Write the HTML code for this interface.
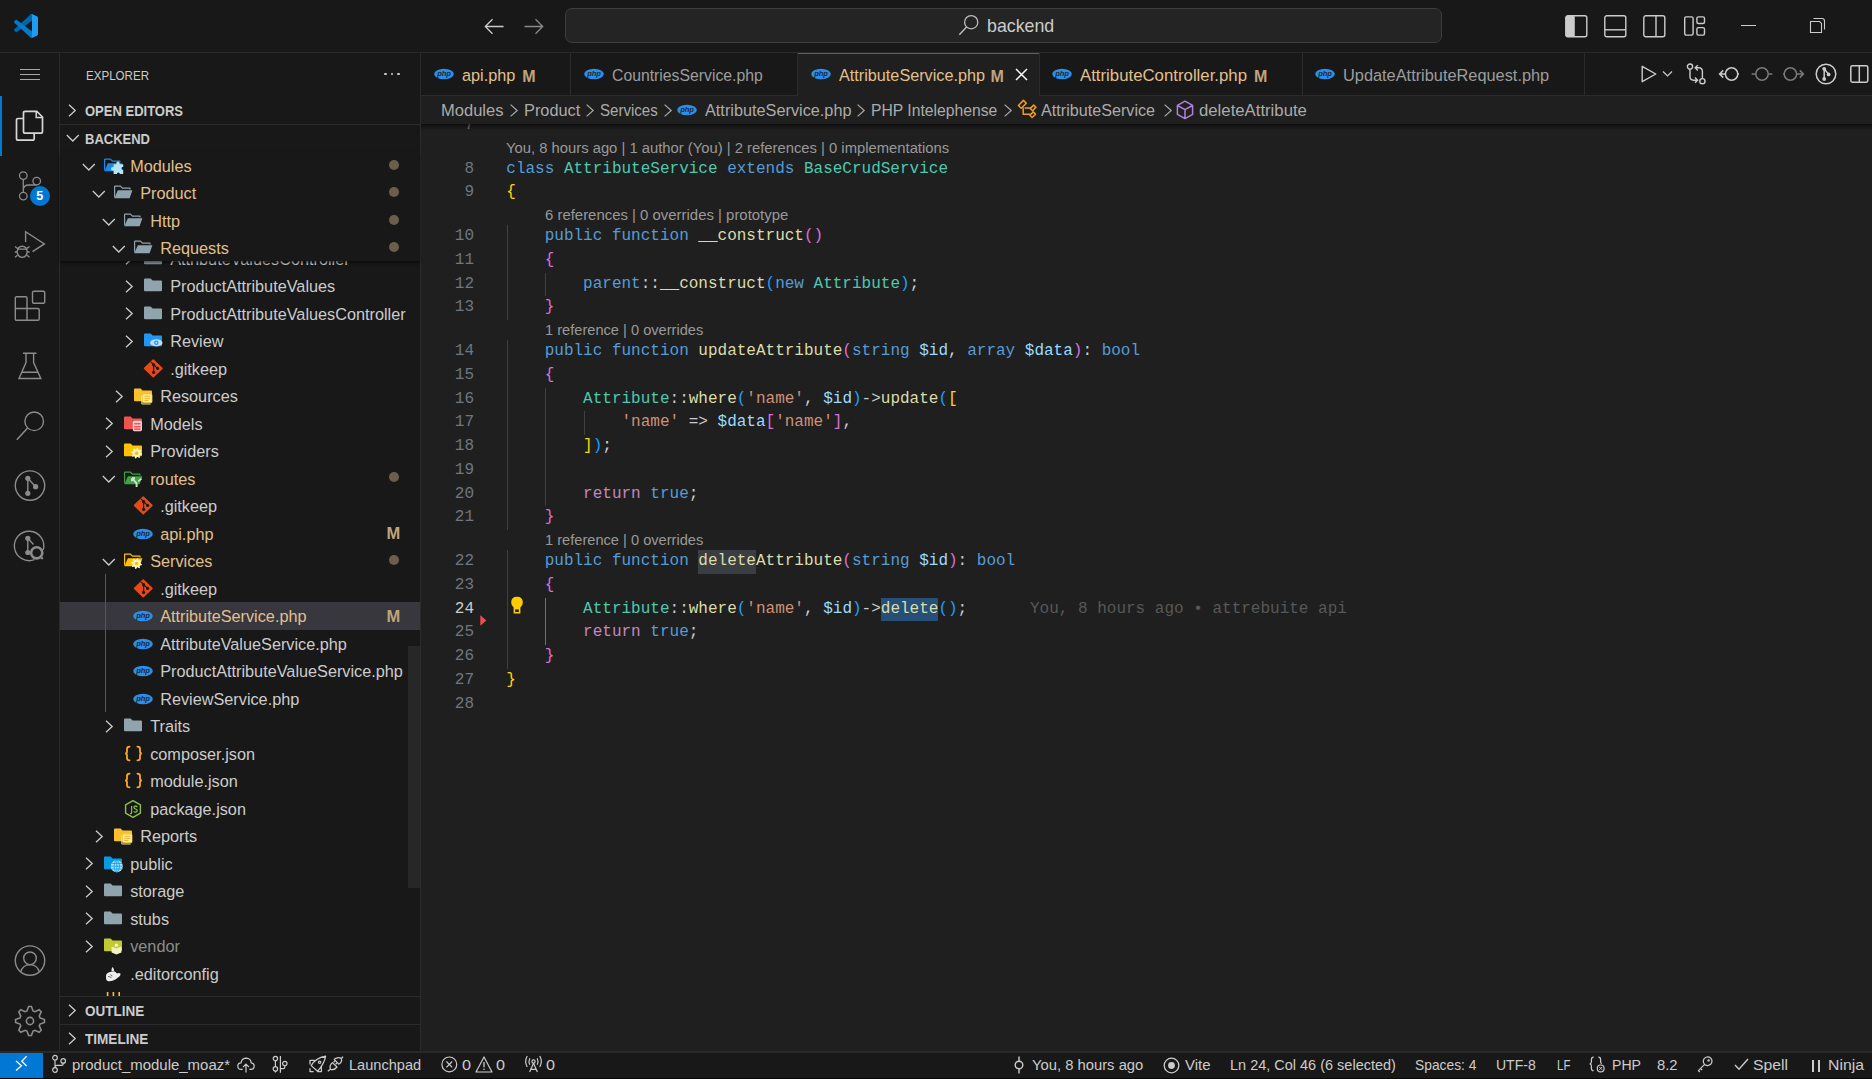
<!DOCTYPE html><html><head><meta charset="utf-8"><title>VS Code</title><style>
*{box-sizing:border-box}
html,body{margin:0;padding:0}
body{width:1872px;height:1079px;overflow:hidden;background:#181818;position:relative;font-family:"Liberation Sans",sans-serif;color:#cccccc}
.a{position:absolute}
.t{position:absolute;white-space:pre;line-height:1}
svg{position:absolute;overflow:visible}
.ui{font-size:16.25px}
.mono{font-family:"Liberation Mono",monospace}
</style></head><body>
<div class="a" style="left:0;top:0;width:1872px;height:52px;background:#181818"></div>
<div class="a" style="left:0;top:52px;width:1872px;height:1px;background:#2b2b2b"></div>
<svg style="left:14px;top:14px" width="24" height="24" viewBox="0 0 100 100">
<path d="M96.46 10.8L75.86.87C73.48-.28 70.63.2 68.76 2.07L1.33 63.55c-1.81 1.65-1.81 4.51.01 6.16l5.51 5.01c1.49 1.35 3.72 1.45 5.32.24l81.23-61.62c2.72-2.07 6.64-.13 6.64 3.29v-.24c0-2.4-1.38-4.59-3.54-5.63z" fill="#0065a9"/>
<path d="M96.46 89.2l-20.6 9.92c-2.38 1.15-5.23.66-7.1-1.2L1.33 36.44c-1.81-1.65-1.81-4.51.01-6.16l5.51-5.01c1.49-1.35 3.72-1.45 5.32-.24l81.23 61.62c2.72 2.07 6.640.13 6.64-3.29v.24c0 2.4-1.38 4.59-3.54 5.63z" fill="#007acc"/>
<path d="M75.86 99.13c-2.38 1.14-5.23.66-7.1-1.21 2.3 2.3 6.24.67 6.24-2.58V4.66c0-3.25-3.94-4.88-6.24-2.58 1.87-1.87 4.72-2.36 7.1-1.21l20.6 9.91c2.16 1.04 3.54 3.23 3.54 5.63v67.17c0 2.4-1.38 4.6-3.54 5.63l-20.6 9.92z" fill="#1f9cf0"/>
</svg>
<svg style="left:484px;top:18px" width="20" height="17" viewBox="0 0 20 17"><path d="M19.5 8.5H1.5M8.5 1.3L1.3 8.5L8.5 15.7" stroke="#cccccc" stroke-width="1.3" fill="none"/></svg>
<svg style="left:524px;top:18px" width="20" height="17" viewBox="0 0 20 17"><path d="M0.5 8.5H18.5M11.5 1.3L18.7 8.5L11.5 15.7" stroke="#8a8a8a" stroke-width="1.3" fill="none"/></svg>
<div class="a" style="left:565px;top:8px;width:877px;height:35px;background:#242424;border:1px solid #3d3d3d;border-radius:7px"></div>
<svg style="left:958px;top:14px" width="22" height="22" viewBox="0 0 22 22"><circle cx="13.2" cy="8.2" r="6.6" stroke="#bdbdbd" stroke-width="1.3" fill="none"/><path d="M8.6 12.9L1.3 20.8" stroke="#bdbdbd" stroke-width="1.4"/></svg>
<div class="t" style="left:987px;top:16.5px;font-family:'Liberation Sans';font-size:18.5px;font-weight:normal;color:#cccccc;transform:scaleX(0.9608);transform-origin:0 0;">backend</div>
<svg style="left:1565px;top:15px" width="23" height="23" viewBox="0 0 23 23"><rect x="0.8" y="0.8" width="21" height="21" rx="2" stroke="#cccccc" stroke-width="1.4" fill="none"/><rect x="0.8" y="0.8" width="9" height="21" rx="1.5" fill="#cccccc"/></svg>
<svg style="left:1604px;top:15px" width="23" height="23" viewBox="0 0 23 23"><rect x="0.8" y="0.8" width="21" height="21" rx="2" stroke="#cccccc" stroke-width="1.4" fill="none"/><path d="M0.8 14.8H21.8" stroke="#cccccc" stroke-width="1.4"/></svg>
<svg style="left:1643px;top:15px" width="23" height="23" viewBox="0 0 23 23"><rect x="0.8" y="0.8" width="21" height="21" rx="2" stroke="#cccccc" stroke-width="1.4" fill="none"/><path d="M13 0.8V21.8" stroke="#cccccc" stroke-width="1.4"/></svg>
<svg style="left:1684px;top:16px" width="22" height="20" viewBox="0 0 22 20"><rect x="0.7" y="0.9" width="8.4" height="18.2" rx="1.5" stroke="#cccccc" stroke-width="1.4" fill="none"/><rect x="12.9" y="0.9" width="7.6" height="6.6" rx="1.5" stroke="#cccccc" stroke-width="1.4" fill="none"/><rect x="12.9" y="11.6" width="7.6" height="7.5" rx="1.5" stroke="#cccccc" stroke-width="1.4" fill="none"/></svg>
<div class="a" style="left:1741px;top:25px;width:15px;height:1px;background:#cccccc"></div>
<svg style="left:1809px;top:17px" width="17" height="17" viewBox="0 0 17 17"><path d="M1.5 4.5H10.6L12.5 6.4V15.5H1.5Z" stroke="#cccccc" stroke-width="1.1" fill="none"/><path d="M4.5 1.5H13Q15.5 1.5 15.5 4V12.6" stroke="#cccccc" stroke-width="1.1" fill="none"/></svg>
<div class="a" style="left:0;top:53px;width:59px;height:998px;background:#181818"></div>
<div class="a" style="left:59px;top:53px;width:1px;height:998px;background:#2b2b2b"></div>
<div class="a" style="left:20px;top:69px;width:20px;height:1.2px;background:#a8a8a8"></div>
<div class="a" style="left:20px;top:74px;width:20px;height:1.2px;background:#a8a8a8"></div>
<div class="a" style="left:20px;top:79px;width:20px;height:1.2px;background:#a8a8a8"></div>
<div class="a" style="left:0;top:96px;width:2px;height:60px;background:#0078d4"></div>
<svg style="left:15px;top:110px" width="30" height="32" viewBox="0 0 30 32">
<path d="M8.5 8.5H3.2Q1.5 8.5 1.5 10.2V28.5Q1.5 30.2 3.2 30.2H17.5Q19.2 30.2 19.2 28.5V23.5" stroke="#d7d7d7" stroke-width="1.7" fill="none"/>
<path d="M10.2 1.3H21.8L27.5 7V21.5Q27.5 23.2 25.8 23.2H10.2Q8.5 23.2 8.5 21.5V3Q8.5 1.3 10.2 1.3Z" stroke="#d7d7d7" stroke-width="1.7" fill="none"/>
<path d="M21.2 1.5V7.6H27.3" stroke="#d7d7d7" stroke-width="1.5" fill="none"/>
</svg>
<svg style="left:15px;top:168px" width="32" height="40" viewBox="0 0 32 40">
<circle cx="8.3" cy="7.6" r="3.8" stroke="#8c8c8c" stroke-width="1.3" fill="none"/>
<circle cx="21.7" cy="13.1" r="3.8" stroke="#8c8c8c" stroke-width="1.3" fill="none"/>
<circle cx="8.3" cy="28.1" r="3.8" stroke="#8c8c8c" stroke-width="1.3" fill="none"/>
<path d="M8.3 11.4V24.3M8.3 22Q8.3 17 14 17H18Q21.7 17 21.7 16.9" stroke="#8c8c8c" stroke-width="1.3" fill="none"/>
</svg>
<div class="a" style="left:30px;top:186px;width:20px;height:20px;border-radius:50%;background:#0078d4"></div>
<div class="t" style="left:36.3px;top:190px;font-size:12.5px;font-weight:bold;color:#ffffff">5</div>
<svg style="left:14px;top:229px" width="34" height="28" viewBox="0 0 34 28">
<path d="M11.6 13V2.7L30.4 14.9L18.5 22.6" stroke="#8c8c8c" stroke-width="1.4" fill="none" stroke-linejoin="miter"/>
<ellipse cx="8.2" cy="22.8" rx="5" ry="5.6" stroke="#8c8c8c" stroke-width="1.4" fill="none"/>
<path d="M3.2 20.2H13.2M1 17.5L3.6 19.4M15.5 17.5L12.8 19.4M0.8 23H3.2M13.2 23H15.6M1 28.2L3.5 26.2M15.5 28.2L13 26.2" stroke="#8c8c8c" stroke-width="1.3" fill="none"/>
</svg>
<svg style="left:14px;top:290px" width="32" height="32" viewBox="0 0 32 32">
<path d="M2.6 6.7H11.7Q13 6.7 13 8V18.5H23.9Q25.2 18.5 25.2 19.8V29Q25.2 30.3 23.9 30.3H2.6Q1.3 30.3 1.3 29V8Q1.3 6.7 2.6 6.7ZM1.3 18.5H13V30.3" stroke="#8c8c8c" stroke-width="1.4" fill="none"/>
<rect x="18.5" y="1.3" width="12.2" height="12" rx="1.3" stroke="#8c8c8c" stroke-width="1.4" fill="none"/>
</svg>
<svg style="left:17px;top:351px" width="26" height="30" viewBox="0 0 26 30">
<path d="M6 2.3H19.5M9 2.3V11.5L2 27.5H23.8L16.6 11.5V2.3M4.6 21.3H21" stroke="#8c8c8c" stroke-width="1.4" fill="none"/>
</svg>
<svg style="left:15px;top:410px" width="32" height="32" viewBox="0 0 32 32">
<circle cx="19.2" cy="11.3" r="9.3" stroke="#8c8c8c" stroke-width="1.4" fill="none"/>
<path d="M12.6 17.9L1.8 29.8" stroke="#8c8c8c" stroke-width="1.5" fill="none"/>
</svg>
<svg style="left:14px;top:470px" width="32" height="32" viewBox="0 0 32 32">
<circle cx="16" cy="15.6" r="14.7" stroke="#8c8c8c" stroke-width="1.4" fill="none"/>
<circle cx="13.8" cy="8.3" r="2.6" fill="#8c8c8c"/><circle cx="21.6" cy="16.7" r="2.6" fill="#8c8c8c"/><circle cx="13.8" cy="23.3" r="2.6" fill="#8c8c8c"/>
<path d="M13.8 8.3V23.3M13.8 8.3L21.6 16.7" stroke="#8c8c8c" stroke-width="1.4"/>
</svg>
<svg style="left:14px;top:530px" width="32" height="32" viewBox="0 0 32 32">
<path d="M29.2 20A14.7 14.7 0 1 0 20.5 29.6" stroke="#8c8c8c" stroke-width="1.4" fill="none"/>
<circle cx="13.8" cy="8.3" r="2.6" fill="#8c8c8c"/><circle cx="13.8" cy="22.5" r="2.6" fill="#8c8c8c"/>
<path d="M13.8 8.3V22.5M13.8 8.3L19.5 14.5" stroke="#8c8c8c" stroke-width="1.4"/>
<circle cx="22.7" cy="22.8" r="5.6" stroke="#8c8c8c" stroke-width="2.6" fill="#181818"/>
<path d="M26.4 26.5L28.8 29" stroke="#8c8c8c" stroke-width="2"/>
</svg>
<svg style="left:14px;top:945px" width="32" height="32" viewBox="0 0 32 32">
<circle cx="16" cy="15.6" r="14.7" stroke="#8c8c8c" stroke-width="1.4" fill="none"/>
<circle cx="16" cy="13.3" r="6.3" stroke="#8c8c8c" stroke-width="1.4" fill="none"/>
<path d="M6.6 27.2Q8.5 19.8 16 19.6Q23.5 19.8 25.4 27.2" stroke="#8c8c8c" stroke-width="1.4" fill="none"/>
</svg>
<svg style="left:14px;top:1005px" width="32" height="32" viewBox="0 0 32 32">
<polygon points="14.58,1.57 17.42,1.57 19.05,5.95 20.95,6.74 25.20,4.79 27.21,6.80 25.26,11.05 26.05,12.95 30.43,14.58 30.43,17.42 26.05,19.05 25.26,20.95 27.21,25.20 25.20,27.21 20.95,25.26 19.05,26.05 17.42,30.43 14.58,30.43 12.95,26.05 11.05,25.26 6.80,27.21 4.79,25.20 6.74,20.95 5.95,19.05 1.57,17.42 1.57,14.58 5.95,12.95 6.74,11.05 4.79,6.80 6.80,4.79 11.05,6.74 12.95,5.95" stroke="#8c8c8c" stroke-width="1.6" fill="none" stroke-linejoin="miter"/>
<circle cx="16" cy="16" r="3.6" stroke="#8c8c8c" stroke-width="1.6" fill="none"/>
</svg>
<div class="a" style="left:60px;top:53px;width:360px;height:998px;background:#181818"></div>
<div class="a" style="left:420px;top:53px;width:1px;height:998px;background:#2b2b2b"></div>
<div class="t" style="left:85.5px;top:68.6px;font-family:'Liberation Sans';font-size:13.5px;font-weight:normal;color:#cccccc;transform:scaleX(0.8569);transform-origin:0 0;">EXPLORER</div>
<div class="a" style="left:384.3px;top:72.6px;width:2.4px;height:2.4px;border-radius:50%;background:#cccccc"></div>
<div class="a" style="left:390.8px;top:72.6px;width:2.4px;height:2.4px;border-radius:50%;background:#cccccc"></div>
<div class="a" style="left:397.3px;top:72.6px;width:2.4px;height:2.4px;border-radius:50%;background:#cccccc"></div>
<svg style="left:68.3px;top:103.8px" width="9" height="13" viewBox="0 0 9 13"><path d="M1 0.8L7.2 6.5L1 12.2" stroke="#cccccc" stroke-width="1.3" fill="none"/></svg>
<div class="t" style="left:85px;top:104.0px;font-family:'Liberation Sans';font-size:14px;font-weight:bold;color:#cccccc;transform:scaleX(0.9286);transform-origin:0 0;">OPEN EDITORS</div>
<div class="a" style="left:60px;top:124px;width:360px;height:1px;background:#2b2b2b"></div>
<svg style="left:66px;top:134px" width="14" height="8" viewBox="0 0 14 8"><path d="M0.8 1L6.8 7L12.8 1" stroke="#cccccc" stroke-width="1.3" fill="none"/></svg>
<div class="t" style="left:85px;top:132.0px;font-family:'Liberation Sans';font-size:14px;font-weight:bold;color:#cccccc;transform:scaleX(0.9286);transform-origin:0 0;">BACKEND</div>
<div class="a" style="left:60px;top:152px;width:360px;height:844px;overflow:hidden">
<div class="a" style="left:-60px;top:-152px;width:420px;height:1079px">
<svg style="left:124.65px;top:252.2px" width="9" height="13" viewBox="0 0 9 13"><path d="M1 0.8L7.2 6.5L1 12.2" stroke="#cccccc" stroke-width="1.3" fill="none"/></svg>
<svg style="left:142.7px;top:248.7px" width="20" height="20" viewBox="0 0 20 20"><path d="M1 3.6Q1 2.6 2 2.6H7.6L9.6 4.6H18Q19 4.6 19 5.6V14.2Q19 15.2 18 15.2H2Q1 15.2 1 14.2Z" fill="#90a4ae"/></svg>
<div class="t ui" style="left:170.2px;top:250.49999999999997px;color:#cccccc">AttributeValuesController</div>
<svg style="left:124.65px;top:279.7px" width="9" height="13" viewBox="0 0 9 13"><path d="M1 0.8L7.2 6.5L1 12.2" stroke="#cccccc" stroke-width="1.3" fill="none"/></svg>
<svg style="left:142.7px;top:276.2px" width="20" height="20" viewBox="0 0 20 20"><path d="M1 3.6Q1 2.6 2 2.6H7.6L9.6 4.6H18Q19 4.6 19 5.6V14.2Q19 15.2 18 15.2H2Q1 15.2 1 14.2Z" fill="#90a4ae"/></svg>
<div class="t ui" style="left:170.2px;top:278.0px;color:#cccccc">ProductAttributeValues</div>
<svg style="left:124.65px;top:307.2px" width="9" height="13" viewBox="0 0 9 13"><path d="M1 0.8L7.2 6.5L1 12.2" stroke="#cccccc" stroke-width="1.3" fill="none"/></svg>
<svg style="left:142.7px;top:303.7px" width="20" height="20" viewBox="0 0 20 20"><path d="M1 3.6Q1 2.6 2 2.6H7.6L9.6 4.6H18Q19 4.6 19 5.6V14.2Q19 15.2 18 15.2H2Q1 15.2 1 14.2Z" fill="#90a4ae"/></svg>
<div class="t ui" style="left:170.2px;top:305.5px;color:#cccccc">ProductAttributeValuesController</div>
<svg style="left:124.65px;top:334.7px" width="9" height="13" viewBox="0 0 9 13"><path d="M1 0.8L7.2 6.5L1 12.2" stroke="#cccccc" stroke-width="1.3" fill="none"/></svg>
<svg style="left:142.7px;top:331.2px" width="20" height="20" viewBox="0 0 20 20"><path d="M1 3.6Q1 2.6 2 2.6H7.6L9.6 4.6H18Q19 4.6 19 5.6V14.2Q19 15.2 18 15.2H2Q1 15.2 1 14.2Z" fill="#2196f3"/><ellipse cx="13.3" cy="11.8" rx="6.2" ry="3.6" fill="#bbdefb"/><circle cx="13.3" cy="11.8" r="2.2" fill="#2196f3"/><circle cx="13.3" cy="11.8" r="1" fill="#bbdefb"/></svg>
<div class="t ui" style="left:170.2px;top:333.0px;color:#cccccc">Review</div>
<svg style="left:142.7px;top:358.7px" width="20" height="20" viewBox="0 0 20 20"><path d="M10.25 1.2L18.9 9.45L10.25 17.7L1.6 9.45Z" fill="#e64a19" stroke="#e64a19" stroke-width="1.6" stroke-linejoin="round"/><path d="M8 2.8L10.6 5.7V13.4M10.6 5.7L14.6 9.4" stroke="#1a1a1a" stroke-width="1.2" fill="none"/><circle cx="10.6" cy="5.7" r="1.6" fill="#1a1a1a"/><circle cx="14.6" cy="9.4" r="1.6" fill="#1a1a1a"/><circle cx="10.6" cy="13.4" r="1.6" fill="#1a1a1a"/></svg>
<div class="t ui" style="left:170.2px;top:360.5px;color:#cccccc">.gitkeep</div>
<svg style="left:114.65px;top:389.7px" width="9" height="13" viewBox="0 0 9 13"><path d="M1 0.8L7.2 6.5L1 12.2" stroke="#cccccc" stroke-width="1.3" fill="none"/></svg>
<svg style="left:132.7px;top:386.2px" width="20" height="20" viewBox="0 0 20 20"><path d="M1 3.6Q1 2.6 2 2.6H7.6L9.6 4.6H18Q19 4.6 19 5.6V14.2Q19 15.2 18 15.2H2Q1 15.2 1 14.2Z" fill="#fbc02d"/><rect x="9.6" y="8" width="9.4" height="8.8" rx="1" fill="#fff59d" stroke="#fbc02d" stroke-width="0.8"/><path d="M11.4 10.2H17.2M11.4 12.3H17.2M11.4 14.4H15.4" stroke="#f9a825" stroke-width="1"/><path d="M8.8 9.6V18H17.6" stroke="#fff59d" stroke-width="0.9" fill="none"/></svg>
<div class="t ui" style="left:160.2px;top:388.0px;color:#cccccc">Resources</div>
<svg style="left:104.65px;top:417.2px" width="9" height="13" viewBox="0 0 9 13"><path d="M1 0.8L7.2 6.5L1 12.2" stroke="#cccccc" stroke-width="1.3" fill="none"/></svg>
<svg style="left:122.7px;top:413.7px" width="20" height="20" viewBox="0 0 20 20"><path d="M1 3.6Q1 2.6 2 2.6H7.6L9.6 4.6H18Q19 4.6 19 5.6V14.2Q19 15.2 18 15.2H2Q1 15.2 1 14.2Z" fill="#ef5350"/><rect x="9.8" y="6.8" width="9.2" height="10.4" rx="1.6" fill="#ffcdd2"/><path d="M11.2 9.8H17.6M11.2 12.8H17.6" stroke="#ef5350" stroke-width="1.6"/><rect x="11.2" y="14.4" width="6.4" height="1.6" fill="#ef5350"/></svg>
<div class="t ui" style="left:150.2px;top:415.5px;color:#cccccc">Models</div>
<svg style="left:104.65px;top:444.7px" width="9" height="13" viewBox="0 0 9 13"><path d="M1 0.8L7.2 6.5L1 12.2" stroke="#cccccc" stroke-width="1.3" fill="none"/></svg>
<svg style="left:122.7px;top:441.2px" width="20" height="20" viewBox="0 0 20 20"><path d="M1 3.6Q1 2.6 2 2.6H7.6L9.6 4.6H18Q19 4.6 19 5.6V14.2Q19 15.2 18 15.2H2Q1 15.2 1 14.2Z" fill="#ffc107"/><polygon points="18.97,12.73 18.77,13.77 17.03,14.03 16.61,14.67 17.03,16.37 16.15,16.96 14.73,15.92 13.98,16.07 13.07,17.57 12.03,17.37 11.77,15.63 11.13,15.21 9.43,15.63 8.84,14.75 9.88,13.33 9.73,12.58 8.23,11.67 8.43,10.63 10.17,10.37 10.59,9.73 10.17,8.03 11.05,7.44 12.47,8.48 13.22,8.33 14.13,6.83 15.17,7.03 15.43,8.77 16.07,9.19 17.77,8.77 18.36,9.65 17.32,11.07 17.47,11.82" fill="#fff9c4"/><circle cx="13.6" cy="12.2" r="1.84" fill="#ffc107"/></svg>
<div class="t ui" style="left:150.2px;top:443.0px;color:#cccccc">Providers</div>
<svg style="left:101.95px;top:475.4px" width="14" height="8" viewBox="0 0 14 8"><path d="M0.8 1L6.8 7L12.8 1" stroke="#cccccc" stroke-width="1.3" fill="none"/></svg>
<svg style="left:122.7px;top:468.7px" width="20" height="20" viewBox="0 0 20 20"><path d="M1 3.6Q1 2.6 2 2.6H7.6L9.6 4.6H16.6Q17.6 4.6 17.6 5.6V6.6H16.4V5.8H9.2L7.2 3.8H2.2V13L1 15.2Z" fill="#43a047"/><path d="M4.8 7.2H19.4L16.6 15.2H1.4Z" fill="#43a047"/><path d="M9 9.2L13.6 14.4V18M9 9.2H12M9 9.2V12.2M18.4 9.6L15.2 12.4" stroke="#c8e6c9" stroke-width="1.9" fill="none"/></svg>
<div class="t ui" style="left:150.2px;top:470.5px;color:#e2c08d">routes</div>
<div class="a" style="left:388.9px;top:472.4px;width:10px;height:10px;border-radius:50%;background:#6b5f4b"></div>
<svg style="left:132.7px;top:496.2px" width="20" height="20" viewBox="0 0 20 20"><path d="M10.25 1.2L18.9 9.45L10.25 17.7L1.6 9.45Z" fill="#e64a19" stroke="#e64a19" stroke-width="1.6" stroke-linejoin="round"/><path d="M8 2.8L10.6 5.7V13.4M10.6 5.7L14.6 9.4" stroke="#1a1a1a" stroke-width="1.2" fill="none"/><circle cx="10.6" cy="5.7" r="1.6" fill="#1a1a1a"/><circle cx="14.6" cy="9.4" r="1.6" fill="#1a1a1a"/><circle cx="10.6" cy="13.4" r="1.6" fill="#1a1a1a"/></svg>
<div class="t ui" style="left:160.2px;top:498.0px;color:#cccccc">.gitkeep</div>
<svg style="left:132.7px;top:523.6999999999999px" width="20" height="20" viewBox="0 0 20 20"><ellipse cx="10" cy="10" rx="9.8" ry="5.2" fill="#2d8ee8"/><text x="10" y="12.4" text-anchor="middle" font-family="Liberation Sans" font-style="italic" font-weight="bold" font-size="7.6" fill="#1a2a3a" letter-spacing="-0.2">php</text></svg>
<div class="t ui" style="left:160.2px;top:525.5px;color:#e2c08d">api.php</div>
<div class="t" style="left:386.6px;top:525.1999999999999px;font-size:16.5px;font-weight:bold;color:#c0a47a">M</div>
<svg style="left:101.95px;top:557.9px" width="14" height="8" viewBox="0 0 14 8"><path d="M0.8 1L6.8 7L12.8 1" stroke="#cccccc" stroke-width="1.3" fill="none"/></svg>
<svg style="left:122.7px;top:551.1999999999999px" width="20" height="20" viewBox="0 0 20 20"><path d="M1 3.6Q1 2.6 2 2.6H7.6L9.6 4.6H16.6Q17.6 4.6 17.6 5.6V6.6H16.4V5.8H9.2L7.2 3.8H2.2V13L1 15.2Z" fill="#ffc107"/><path d="M4.8 7.2H19.4L16.6 15.2H1.4Z" fill="#ffc107"/><polygon points="18.97,13.13 18.77,14.17 17.03,14.43 16.61,15.07 17.03,16.77 16.15,17.36 14.73,16.32 13.98,16.47 13.07,17.97 12.03,17.77 11.77,16.03 11.13,15.61 9.43,16.03 8.84,15.15 9.88,13.73 9.73,12.98 8.23,12.07 8.43,11.03 10.17,10.77 10.59,10.13 10.17,8.43 11.05,7.84 12.47,8.88 13.22,8.73 14.13,7.23 15.17,7.43 15.43,9.17 16.07,9.59 17.77,9.17 18.36,10.05 17.32,11.47 17.47,12.22" fill="#fff9c4"/><circle cx="13.6" cy="12.6" r="1.84" fill="#ffc107"/></svg>
<div class="t ui" style="left:150.2px;top:553.0px;color:#e2c08d">Services</div>
<div class="a" style="left:388.9px;top:554.9px;width:10px;height:10px;border-radius:50%;background:#6b5f4b"></div>
<svg style="left:132.7px;top:578.6999999999999px" width="20" height="20" viewBox="0 0 20 20"><path d="M10.25 1.2L18.9 9.45L10.25 17.7L1.6 9.45Z" fill="#e64a19" stroke="#e64a19" stroke-width="1.6" stroke-linejoin="round"/><path d="M8 2.8L10.6 5.7V13.4M10.6 5.7L14.6 9.4" stroke="#1a1a1a" stroke-width="1.2" fill="none"/><circle cx="10.6" cy="5.7" r="1.6" fill="#1a1a1a"/><circle cx="14.6" cy="9.4" r="1.6" fill="#1a1a1a"/><circle cx="10.6" cy="13.4" r="1.6" fill="#1a1a1a"/></svg>
<div class="t ui" style="left:160.2px;top:580.5px;color:#cccccc">.gitkeep</div>
<div class="a" style="left:60px;top:602.0px;width:360px;height:27.5px;background:#37373d"></div>
<svg style="left:132.7px;top:606.1999999999999px" width="20" height="20" viewBox="0 0 20 20"><ellipse cx="10" cy="10" rx="9.8" ry="5.2" fill="#2d8ee8"/><text x="10" y="12.4" text-anchor="middle" font-family="Liberation Sans" font-style="italic" font-weight="bold" font-size="7.6" fill="#1a2a3a" letter-spacing="-0.2">php</text></svg>
<div class="t ui" style="left:160.2px;top:608.0px;color:#e2c08d">AttributeService.php</div>
<div class="t" style="left:386.6px;top:607.6999999999999px;font-size:16.5px;font-weight:bold;color:#c0a47a">M</div>
<svg style="left:132.7px;top:633.6999999999999px" width="20" height="20" viewBox="0 0 20 20"><ellipse cx="10" cy="10" rx="9.8" ry="5.2" fill="#2d8ee8"/><text x="10" y="12.4" text-anchor="middle" font-family="Liberation Sans" font-style="italic" font-weight="bold" font-size="7.6" fill="#1a2a3a" letter-spacing="-0.2">php</text></svg>
<div class="t ui" style="left:160.2px;top:635.5px;color:#cccccc">AttributeValueService.php</div>
<svg style="left:132.7px;top:661.1999999999999px" width="20" height="20" viewBox="0 0 20 20"><ellipse cx="10" cy="10" rx="9.8" ry="5.2" fill="#2d8ee8"/><text x="10" y="12.4" text-anchor="middle" font-family="Liberation Sans" font-style="italic" font-weight="bold" font-size="7.6" fill="#1a2a3a" letter-spacing="-0.2">php</text></svg>
<div class="t ui" style="left:160.2px;top:663.0px;color:#cccccc">ProductAttributeValueService.php</div>
<svg style="left:132.7px;top:688.6999999999999px" width="20" height="20" viewBox="0 0 20 20"><ellipse cx="10" cy="10" rx="9.8" ry="5.2" fill="#2d8ee8"/><text x="10" y="12.4" text-anchor="middle" font-family="Liberation Sans" font-style="italic" font-weight="bold" font-size="7.6" fill="#1a2a3a" letter-spacing="-0.2">php</text></svg>
<div class="t ui" style="left:160.2px;top:690.5px;color:#cccccc">ReviewService.php</div>
<svg style="left:104.65px;top:719.6999999999999px" width="9" height="13" viewBox="0 0 9 13"><path d="M1 0.8L7.2 6.5L1 12.2" stroke="#cccccc" stroke-width="1.3" fill="none"/></svg>
<svg style="left:122.7px;top:716.1999999999999px" width="20" height="20" viewBox="0 0 20 20"><path d="M1 3.6Q1 2.6 2 2.6H7.6L9.6 4.6H18Q19 4.6 19 5.6V14.2Q19 15.2 18 15.2H2Q1 15.2 1 14.2Z" fill="#90a4ae"/></svg>
<div class="t ui" style="left:150.2px;top:718.0px;color:#cccccc">Traits</div>
<svg style="left:122.7px;top:743.6999999999999px" width="20" height="20" viewBox="0 0 20 20"><path d="M6.6 2.6Q4 2.6 4 5V7.6Q4 9.4 2.2 9.5Q4 9.6 4 11.4V13.9Q4 16.3 6.6 16.3M14.4 2.6Q17 2.6 17 5V7.6Q17 9.4 18.8 9.5Q17 9.6 17 11.4V13.9Q17 16.3 14.4 16.3" stroke="#f9a825" stroke-width="1.8" fill="none" stroke-linecap="round"/></svg>
<div class="t ui" style="left:150.2px;top:745.5px;color:#cccccc">composer.json</div>
<svg style="left:122.7px;top:771.1999999999999px" width="20" height="20" viewBox="0 0 20 20"><path d="M6.6 2.6Q4 2.6 4 5V7.6Q4 9.4 2.2 9.5Q4 9.6 4 11.4V13.9Q4 16.3 6.6 16.3M14.4 2.6Q17 2.6 17 5V7.6Q17 9.4 18.8 9.5Q17 9.6 17 11.4V13.9Q17 16.3 14.4 16.3" stroke="#f9a825" stroke-width="1.8" fill="none" stroke-linecap="round"/></svg>
<div class="t ui" style="left:150.2px;top:773.0px;color:#cccccc">module.json</div>
<svg style="left:122.7px;top:798.6999999999999px" width="20" height="20" viewBox="0 0 20 20"><path d="M10 1.6L17.4 5.8V14.2L10 18.4L2.6 14.2V5.8Z" stroke="#8bc34a" stroke-width="1.4" fill="none" stroke-linejoin="round"/><path d="M8.6 7V13.4Q8.6 14.8 7 14.6M14.2 8.2Q13.6 7 12.2 7.2Q10.8 7.4 11 8.6Q11.2 9.6 12.6 10Q14.2 10.4 14.2 11.8Q14.2 13.2 12.4 13.2Q11.2 13.2 10.8 12.2" stroke="#8bc34a" stroke-width="1.2" fill="none"/></svg>
<div class="t ui" style="left:150.2px;top:800.5px;color:#cccccc">package.json</div>
<svg style="left:94.65px;top:829.6999999999999px" width="9" height="13" viewBox="0 0 9 13"><path d="M1 0.8L7.2 6.5L1 12.2" stroke="#cccccc" stroke-width="1.3" fill="none"/></svg>
<svg style="left:112.7px;top:826.1999999999999px" width="20" height="20" viewBox="0 0 20 20"><path d="M1 3.6Q1 2.6 2 2.6H7.6L9.6 4.6H18Q19 4.6 19 5.6V14.2Q19 15.2 18 15.2H2Q1 15.2 1 14.2Z" fill="#fbc02d"/><rect x="9.6" y="8" width="9.4" height="8.8" rx="1" fill="#fff59d" stroke="#fbc02d" stroke-width="0.8"/><path d="M11.4 10.2H17.2M11.4 12.3H17.2M11.4 14.4H15.4" stroke="#f9a825" stroke-width="1"/><path d="M8.8 9.6V18H17.6" stroke="#fff59d" stroke-width="0.9" fill="none"/></svg>
<div class="t ui" style="left:140.2px;top:828.0px;color:#cccccc">Reports</div>
<svg style="left:84.65px;top:857.1999999999999px" width="9" height="13" viewBox="0 0 9 13"><path d="M1 0.8L7.2 6.5L1 12.2" stroke="#cccccc" stroke-width="1.3" fill="none"/></svg>
<svg style="left:102.7px;top:853.6999999999999px" width="20" height="20" viewBox="0 0 20 20"><path d="M1 3.6Q1 2.6 2 2.6H7.6L9.6 4.6H18Q19 4.6 19 5.6V14.2Q19 15.2 18 15.2H2Q1 15.2 1 14.2Z" fill="#039be5"/><circle cx="13.8" cy="12.2" r="6" fill="#b3e5fc"/><path d="M7.8 12.2H19.8M13.8 6.2V18.2M8.6 9.4H19M8.6 15H19" stroke="#039be5" stroke-width="0.8" fill="none"/><ellipse cx="13.8" cy="12.2" rx="2.6" ry="6" stroke="#039be5" stroke-width="0.8" fill="none"/></svg>
<div class="t ui" style="left:130.2px;top:855.5px;color:#cccccc">public</div>
<svg style="left:84.65px;top:884.6999999999999px" width="9" height="13" viewBox="0 0 9 13"><path d="M1 0.8L7.2 6.5L1 12.2" stroke="#cccccc" stroke-width="1.3" fill="none"/></svg>
<svg style="left:102.7px;top:881.1999999999999px" width="20" height="20" viewBox="0 0 20 20"><path d="M1 3.6Q1 2.6 2 2.6H7.6L9.6 4.6H18Q19 4.6 19 5.6V14.2Q19 15.2 18 15.2H2Q1 15.2 1 14.2Z" fill="#90a4ae"/></svg>
<div class="t ui" style="left:130.2px;top:883.0px;color:#cccccc">storage</div>
<svg style="left:84.65px;top:912.1999999999999px" width="9" height="13" viewBox="0 0 9 13"><path d="M1 0.8L7.2 6.5L1 12.2" stroke="#cccccc" stroke-width="1.3" fill="none"/></svg>
<svg style="left:102.7px;top:908.6999999999999px" width="20" height="20" viewBox="0 0 20 20"><path d="M1 3.6Q1 2.6 2 2.6H7.6L9.6 4.6H18Q19 4.6 19 5.6V14.2Q19 15.2 18 15.2H2Q1 15.2 1 14.2Z" fill="#90a4ae"/></svg>
<div class="t ui" style="left:130.2px;top:910.5px;color:#cccccc">stubs</div>
<svg style="left:84.65px;top:939.6999999999999px" width="9" height="13" viewBox="0 0 9 13"><path d="M1 0.8L7.2 6.5L1 12.2" stroke="#cccccc" stroke-width="1.3" fill="none"/></svg>
<svg style="left:102.7px;top:936.1999999999999px" width="20" height="20" viewBox="0 0 20 20"><path d="M1 3.6Q1 2.6 2 2.6H7.6L9.6 4.6H18Q19 4.6 19 5.6V14.2Q19 15.2 18 15.2H2Q1 15.2 1 14.2Z" fill="#c0ca33"/><path d="M8.6 10.6L13.4 12.4L18.4 10.6V16.6L13.4 18.4L8.6 16.6Z" fill="#f0f4c3"/><circle cx="13.4" cy="9.2" r="1.7" fill="#f0f4c3"/></svg>
<div class="t ui" style="left:130.2px;top:938.0px;color:#8c8c8c">vendor</div>
<svg style="left:102.7px;top:963.6999999999999px" width="20" height="20" viewBox="0 0 20 20"><path d="M3 12.8Q2.6 9.2 6.2 8.2L9.2 7.4Q11.6 6.8 13 8.4L14 9.6Q16 8.4 17.4 9.6Q18 11.2 16.4 12.4L12.4 15.4Q8.6 17.8 4.6 17Q2.8 16.4 3 12.8Z" fill="#eeeeee"/><path d="M8.6 7.2Q8.2 4.6 9.8 2.8Q10.8 4.8 11.2 6.8" fill="#eeeeee"/><path d="M5 12.4L8.6 13.4M7.2 10.6L9.4 12" stroke="#555" stroke-width="0.8"/></svg>
<div class="t ui" style="left:130.2px;top:965.5px;color:#cccccc">.editorconfig</div>
<svg style="left:102.7px;top:991.1999999999999px" width="20" height="20" viewBox="0 0 20 20"><path d="M4.6 1V19M10.4 1V19M16.2 1V19" stroke="#fbc02d" stroke-width="1.6"/></svg>
<div class="t ui" style="left:130.2px;top:993.0px;color:#cccccc"></div>
<div class="a" style="left:105px;top:574px;width:1px;height:137.5px;background:#585858"></div>
<div class="a" style="left:408px;top:646px;width:12px;height:242px;background:#272727"></div>
</div></div>
<div class="a" style="left:60px;top:152px;width:360px;height:109px;background:#181818;box-shadow:0 2px 3px rgba(0,0,0,0.55)"></div>
<svg style="left:81.95px;top:162.5px" width="14" height="8" viewBox="0 0 14 8"><path d="M0.8 1L6.8 7L12.8 1" stroke="#cccccc" stroke-width="1.3" fill="none"/></svg>
<svg style="left:102.7px;top:155.8px" width="20" height="20" viewBox="0 0 20 20"><path d="M1 3.6Q1 2.6 2 2.6H7.6L9.6 4.6H16.6Q17.6 4.6 17.6 5.6V6.6H16.4V5.8H9.2L7.2 3.8H2.2V13L1 15.2Z" fill="#1e88e5"/><path d="M4.8 7.2H19.4L16.6 15.2H1.4Z" fill="#1e88e5"/><path d="M10.6 8.2H13.4Q13 5.6 15 5.6Q17 5.6 16.6 8.2H20.2V11Q18.6 10.6 18.6 12.4Q18.6 14.2 20.2 13.8V18.1H16.8Q17 16.6 15.4 16.6Q13.8 16.6 14 18.1H10.6V14.6Q8 15 8 12.8Q8 10.6 10.6 11Z" fill="#b3e5fc"/></svg>
<div class="t ui" style="left:130.2px;top:157.6px;color:#e2c08d">Modules</div>
<div class="a" style="left:388.9px;top:159.5px;width:10px;height:10px;border-radius:50%;background:#6b5f4b"></div>
<svg style="left:91.95px;top:190.0px" width="14" height="8" viewBox="0 0 14 8"><path d="M0.8 1L6.8 7L12.8 1" stroke="#cccccc" stroke-width="1.3" fill="none"/></svg>
<svg style="left:112.7px;top:183.3px" width="20" height="20" viewBox="0 0 20 20"><path d="M1 3.6Q1 2.6 2 2.6H7.6L9.6 4.6H16.6Q17.6 4.6 17.6 5.6V6.6H16.4V5.8H9.2L7.2 3.8H2.2V13L1 15.2Z" fill="#90a4ae"/><path d="M4.8 7.2H19.4L16.6 15.2H1.4Z" fill="#90a4ae"/></svg>
<div class="t ui" style="left:140.2px;top:185.1px;color:#e2c08d">Product</div>
<div class="a" style="left:388.9px;top:187.0px;width:10px;height:10px;border-radius:50%;background:#6b5f4b"></div>
<svg style="left:101.95px;top:217.5px" width="14" height="8" viewBox="0 0 14 8"><path d="M0.8 1L6.8 7L12.8 1" stroke="#cccccc" stroke-width="1.3" fill="none"/></svg>
<svg style="left:122.7px;top:210.8px" width="20" height="20" viewBox="0 0 20 20"><path d="M1 3.6Q1 2.6 2 2.6H7.6L9.6 4.6H16.6Q17.6 4.6 17.6 5.6V6.6H16.4V5.8H9.2L7.2 3.8H2.2V13L1 15.2Z" fill="#90a4ae"/><path d="M4.8 7.2H19.4L16.6 15.2H1.4Z" fill="#90a4ae"/></svg>
<div class="t ui" style="left:150.2px;top:212.6px;color:#e2c08d">Http</div>
<div class="a" style="left:388.9px;top:214.5px;width:10px;height:10px;border-radius:50%;background:#6b5f4b"></div>
<svg style="left:111.95px;top:245.0px" width="14" height="8" viewBox="0 0 14 8"><path d="M0.8 1L6.8 7L12.8 1" stroke="#cccccc" stroke-width="1.3" fill="none"/></svg>
<svg style="left:132.7px;top:238.3px" width="20" height="20" viewBox="0 0 20 20"><path d="M1 3.6Q1 2.6 2 2.6H7.6L9.6 4.6H16.6Q17.6 4.6 17.6 5.6V6.6H16.4V5.8H9.2L7.2 3.8H2.2V13L1 15.2Z" fill="#90a4ae"/><path d="M4.8 7.2H19.4L16.6 15.2H1.4Z" fill="#90a4ae"/></svg>
<div class="t ui" style="left:160.2px;top:240.1px;color:#e2c08d">Requests</div>
<div class="a" style="left:388.9px;top:242.0px;width:10px;height:10px;border-radius:50%;background:#6b5f4b"></div>
<div class="a" style="left:60px;top:996px;width:360px;height:55px;background:#181818"></div>
<div class="a" style="left:60px;top:996px;width:360px;height:1px;background:#2b2b2b"></div>
<svg style="left:68.3px;top:1003.8px" width="9" height="13" viewBox="0 0 9 13"><path d="M1 0.8L7.2 6.5L1 12.2" stroke="#cccccc" stroke-width="1.3" fill="none"/></svg>
<div class="t" style="left:85px;top:1004.0px;font-family:'Liberation Sans';font-size:14px;font-weight:bold;color:#cccccc;transform:scaleX(0.9635);transform-origin:0 0;">OUTLINE</div>
<div class="a" style="left:60px;top:1024px;width:360px;height:1px;background:#2b2b2b"></div>
<svg style="left:68.3px;top:1031.8px" width="9" height="13" viewBox="0 0 9 13"><path d="M1 0.8L7.2 6.5L1 12.2" stroke="#cccccc" stroke-width="1.3" fill="none"/></svg>
<div class="t" style="left:85px;top:1032.0px;font-family:'Liberation Sans';font-size:14px;font-weight:bold;color:#cccccc;transform:scaleX(0.9689);transform-origin:0 0;">TIMELINE</div>
<div class="a" style="left:421px;top:53px;width:1451px;height:998px;background:#1f1f1f"></div>
<div class="a" style="left:421px;top:53px;width:1451px;height:42px;background:#181818"></div>
<div class="a" style="left:421px;top:95px;width:1451px;height:1px;background:#2b2b2b"></div>
<div class="a" style="left:798px;top:53px;width:241px;height:43px;background:#1f1f1f"></div>
<div class="a" style="left:798px;top:53px;width:241px;height:1.3px;background:#0078d4"></div>
<div class="a" style="left:570px;top:53px;width:1px;height:42px;background:#2b2b2b"></div>
<div class="a" style="left:797px;top:53px;width:1px;height:42px;background:#2b2b2b"></div>
<div class="a" style="left:1039px;top:53px;width:1px;height:42px;background:#2b2b2b"></div>
<div class="a" style="left:1302px;top:53px;width:1px;height:42px;background:#2b2b2b"></div>
<div class="a" style="left:1584px;top:53px;width:1px;height:42px;background:#2b2b2b"></div>
<svg style="left:433.7px;top:64px" width="20" height="20" viewBox="0 0 20 20"><ellipse cx="10" cy="10" rx="9.8" ry="5.2" fill="#2d8ee8"/><text x="10" y="12.4" text-anchor="middle" font-family="Liberation Sans" font-style="italic" font-weight="bold" font-size="7.6" fill="#1a2a3a" letter-spacing="-0.2">php</text></svg>
<div class="t" style="left:461.7px;top:67.2px;font-family:'Liberation Sans';font-size:16.25px;font-weight:normal;color:#e2c08d;transform:scaleX(0.9998);transform-origin:0 0;">api.php</div>
<div class="t" style="left:522.2px;top:68.6px;font-size:16px;font-weight:bold;color:#c0a47a">M</div>
<svg style="left:583.6999999999999px;top:64px" width="20" height="20" viewBox="0 0 20 20"><ellipse cx="10" cy="10" rx="9.8" ry="5.2" fill="#2d8ee8"/><text x="10" y="12.4" text-anchor="middle" font-family="Liberation Sans" font-style="italic" font-weight="bold" font-size="7.6" fill="#1a2a3a" letter-spacing="-0.2">php</text></svg>
<div class="t" style="left:611.7px;top:67.2px;font-family:'Liberation Sans';font-size:16.25px;font-weight:normal;color:#9d9d9d;transform:scaleX(0.9707);transform-origin:0 0;">CountriesService.php</div>
<svg style="left:810.5999999999999px;top:64px" width="20" height="20" viewBox="0 0 20 20"><ellipse cx="10" cy="10" rx="9.8" ry="5.2" fill="#2d8ee8"/><text x="10" y="12.4" text-anchor="middle" font-family="Liberation Sans" font-style="italic" font-weight="bold" font-size="7.6" fill="#1a2a3a" letter-spacing="-0.2">php</text></svg>
<div class="t" style="left:838.6px;top:67.2px;font-family:'Liberation Sans';font-size:16.25px;font-weight:normal;color:#e2c08d;transform:scaleX(0.9977);transform-origin:0 0;">AttributeService.php</div>
<div class="t" style="left:990.6px;top:68.6px;font-size:16px;font-weight:bold;color:#c0a47a">M</div>
<svg style="left:1051.8px;top:64px" width="20" height="20" viewBox="0 0 20 20"><ellipse cx="10" cy="10" rx="9.8" ry="5.2" fill="#2d8ee8"/><text x="10" y="12.4" text-anchor="middle" font-family="Liberation Sans" font-style="italic" font-weight="bold" font-size="7.6" fill="#1a2a3a" letter-spacing="-0.2">php</text></svg>
<div class="t" style="left:1080.3px;top:67.2px;font-family:'Liberation Sans';font-size:16.25px;font-weight:normal;color:#e2c08d;transform:scaleX(1.0328);transform-origin:0 0;">AttributeController.php</div>
<div class="t" style="left:1253.9px;top:68.6px;font-size:16px;font-weight:bold;color:#c0a47a">M</div>
<svg style="left:1314.8px;top:64px" width="20" height="20" viewBox="0 0 20 20"><ellipse cx="10" cy="10" rx="9.8" ry="5.2" fill="#2d8ee8"/><text x="10" y="12.4" text-anchor="middle" font-family="Liberation Sans" font-style="italic" font-weight="bold" font-size="7.6" fill="#1a2a3a" letter-spacing="-0.2">php</text></svg>
<div class="t" style="left:1342.8px;top:67.2px;font-family:'Liberation Sans';font-size:16.25px;font-weight:normal;color:#9d9d9d;transform:scaleX(1.0055);transform-origin:0 0;">UpdateAttributeRequest.php</div>
<svg style="left:1015px;top:68px" width="13" height="13" viewBox="0 0 13 13"><path d="M1 1L12 12M12 1L1 12" stroke="#ffffff" stroke-width="1.5"/></svg>
<svg style="left:1640.5px;top:64.8px" width="17" height="18" viewBox="0 0 17 18"><path d="M1.2 1.3V16.7L14.8 9Z" stroke="#cccccc" stroke-width="1.4" fill="none" stroke-linejoin="round"/></svg>
<svg style="left:1662px;top:69.8px" width="12" height="8" viewBox="0 0 12 8"><path d="M1 1.5L5.5 6L10 1.5" stroke="#cccccc" stroke-width="1.2" fill="none"/></svg>
<svg style="left:1686px;top:62.8px" width="21" height="22" viewBox="0 0 21 22"><circle cx="4" cy="3.6" r="2.6" stroke="#cccccc" stroke-width="1.4" fill="none"/><circle cx="16.4" cy="18.2" r="2.6" stroke="#cccccc" stroke-width="1.4" fill="none"/>
<path d="M4 6.2V13.5Q4 17.2 7.6 17.2H11M9 14.6L11.6 17.2L9 19.8M16.4 15.6V8.4Q16.4 4.8 12.8 4.8H9.6M11.8 2.2L9.2 4.8L11.8 7.4" stroke="#cccccc" stroke-width="1.4" fill="none"/></svg>
<svg style="left:1718px;top:63.8px" width="22" height="20" viewBox="0 0 22 20"><circle cx="13.6" cy="10" r="6.2" stroke="#cccccc" stroke-width="1.5" fill="none"/><path d="M7.4 10H1.6M5.2 6.4L1.6 10L5.2 13.6" stroke="#cccccc" stroke-width="1.5" fill="none"/><path d="M19.8 10H21" stroke="#cccccc" stroke-width="1.5"/></svg>
<svg style="left:1751px;top:63.8px" width="22" height="20" viewBox="0 0 22 20"><circle cx="11" cy="10" r="6.2" stroke="#7a7a7a" stroke-width="1.5" fill="none"/><path d="M0.6 10H4.8M17.2 10H21.4" stroke="#7a7a7a" stroke-width="1.5"/></svg>
<svg style="left:1783px;top:63.8px" width="22" height="20" viewBox="0 0 22 20"><circle cx="7.4" cy="10" r="6.2" stroke="#7a7a7a" stroke-width="1.5" fill="none"/><path d="M13.6 10H20M16.8 6.4L20.4 10L16.8 13.6M0 10H1.2" stroke="#7a7a7a" stroke-width="1.5" fill="none"/></svg>
<svg style="left:1815px;top:62.8px" width="22" height="22" viewBox="0 0 22 22"><circle cx="11" cy="11" r="9.8" stroke="#cccccc" stroke-width="1.5" fill="none"/>
<circle cx="9.2" cy="5.8" r="1.9" fill="#cccccc"/><circle cx="13.6" cy="11.4" r="1.9" fill="#cccccc"/><circle cx="9.2" cy="16" r="1.9" fill="#cccccc"/><path d="M9.2 5.8V16M9.2 5.8L13.6 11.4" stroke="#cccccc" stroke-width="1.5"/></svg>
<svg style="left:1850px;top:64.8px" width="19" height="18" viewBox="0 0 19 18"><rect x="0.8" y="0.8" width="17" height="16.4" rx="1.6" stroke="#cccccc" stroke-width="1.5" fill="none"/><path d="M9.3 0.8V17.2" stroke="#cccccc" stroke-width="1.5"/></svg>
<div class="t" style="left:441.4px;top:101.8px;font-family:'Liberation Sans';font-size:16.25px;font-weight:normal;color:#ababab;transform:scaleX(1.0176);transform-origin:0 0;">Modules</div>
<svg style="left:509.7px;top:103.5px" width="9" height="13" viewBox="0 0 9 13"><path d="M0.6 0.6L7.2 6.5L0.6 12.4" stroke="#ababab" stroke-width="1.2" fill="none"/></svg>
<div class="t" style="left:524px;top:101.8px;font-family:'Liberation Sans';font-size:16.25px;font-weight:normal;color:#ababab;transform:scaleX(1.0035);transform-origin:0 0;">Product</div>
<svg style="left:585.7px;top:103.5px" width="9" height="13" viewBox="0 0 9 13"><path d="M0.6 0.6L7.2 6.5L0.6 12.4" stroke="#ababab" stroke-width="1.2" fill="none"/></svg>
<div class="t" style="left:599.7px;top:101.8px;font-family:'Liberation Sans';font-size:16.25px;font-weight:normal;color:#ababab;transform:scaleX(0.9260);transform-origin:0 0;">Services</div>
<svg style="left:664.2px;top:103.5px" width="9" height="13" viewBox="0 0 9 13"><path d="M0.6 0.6L7.2 6.5L0.6 12.4" stroke="#ababab" stroke-width="1.2" fill="none"/></svg>
<svg style="left:677px;top:100px" width="20" height="20" viewBox="0 0 20 20"><ellipse cx="10" cy="10" rx="9.8" ry="5.2" fill="#2d8ee8"/><text x="10" y="12.4" text-anchor="middle" font-family="Liberation Sans" font-style="italic" font-weight="bold" font-size="7.6" fill="#1a2a3a" letter-spacing="-0.2">php</text></svg>
<div class="t" style="left:704.8px;top:101.8px;font-family:'Liberation Sans';font-size:16.25px;font-weight:normal;color:#ababab;transform:scaleX(1.0012);transform-origin:0 0;">AttributeService.php</div>
<svg style="left:856.7px;top:103.5px" width="9" height="13" viewBox="0 0 9 13"><path d="M0.6 0.6L7.2 6.5L0.6 12.4" stroke="#ababab" stroke-width="1.2" fill="none"/></svg>
<div class="t" style="left:870.5px;top:101.8px;font-family:'Liberation Sans';font-size:16.25px;font-weight:normal;color:#ababab;transform:scaleX(0.9657);transform-origin:0 0;">PHP Intelephense</div>
<svg style="left:1003.7px;top:103.5px" width="9" height="13" viewBox="0 0 9 13"><path d="M0.6 0.6L7.2 6.5L0.6 12.4" stroke="#ababab" stroke-width="1.2" fill="none"/></svg>
<svg style="left:1012px;top:98px" width="30" height="24" viewBox="0 0 30 24"><g stroke="#ee9d28" stroke-width="1.5" fill="none" stroke-linejoin="round"><rect x="-3.6" y="-2" width="7.2" height="4" transform="translate(10.35 6.35) rotate(-45)"/><rect x="-2.4" y="-1.6" width="4.8" height="3.2" transform="translate(21.1 9.9) rotate(-45)"/><rect x="-2.4" y="-1.6" width="4.8" height="3.2" transform="translate(20.7 16.7) rotate(-45)"/><path d="M11.2 9.6V16.3H18.4M12.6 10H19.2"/></g></svg>
<div class="t" style="left:1040.8px;top:101.8px;font-family:'Liberation Sans';font-size:16.25px;font-weight:normal;color:#ababab;transform:scaleX(0.9948);transform-origin:0 0;">AttributeService</div>
<svg style="left:1163.7px;top:103.5px" width="9" height="13" viewBox="0 0 9 13"><path d="M0.6 0.6L7.2 6.5L0.6 12.4" stroke="#ababab" stroke-width="1.2" fill="none"/></svg>
<svg style="left:1176px;top:100px" width="18" height="20" viewBox="0 0 18 20"><path d="M9 1.2L16.6 5.4V14.4L9 18.6L1.4 14.4V5.4Z M1.6 5.5L9 9.6L16.4 5.5 M9 9.6V18.4" stroke="#b180d7" stroke-width="1.5" fill="none" stroke-linejoin="round"/></svg>
<div class="t" style="left:1198.9px;top:101.8px;font-family:'Liberation Sans';font-size:16.25px;font-weight:normal;color:#ababab;transform:scaleX(1.0297);transform-origin:0 0;">deleteAttribute</div>
<div class="a" style="left:421px;top:124px;width:1451px;height:927px;overflow:hidden">
<div class="a" style="left:-421px;top:-124px;width:1872px;height:1079px">
<div class="a" style="left:698.3px;top:550.05px;width:57.599999999999994px;height:23.75px;background:#3a3d41"></div>
<div class="a" style="left:880.7px;top:597.55px;width:57.599999999999994px;height:23.75px;background:#264f78"></div>
<div class="a" style="left:506.90px;top:225.05px;width:1px;height:95.00px;background:#404040"></div>
<div class="a" style="left:506.90px;top:340.05px;width:1px;height:190.00px;background:#404040"></div>
<div class="a" style="left:506.90px;top:550.05px;width:1px;height:118.75px;background:#404040"></div>
<div class="a" style="left:545.30px;top:272.55px;width:1px;height:23.75px;background:#404040"></div>
<div class="a" style="left:545.30px;top:387.55px;width:1px;height:118.75px;background:#404040"></div>
<div class="a" style="left:545.30px;top:597.55px;width:1px;height:47.50px;background:#707070"></div>
<div class="a" style="left:583.70px;top:411.30px;width:1px;height:23.75px;background:#404040"></div>
<div class="t mono" style="left:374px;width:100px;text-align:right;top:113.80px;height:23.75px;line-height:23.75px;font-size:16px;color:#6e7681">7</div>
<div class="t mono" style="left:374px;width:100px;text-align:right;top:157.55px;height:23.75px;line-height:23.75px;font-size:16px;color:#6e7681">8</div>
<div class="t mono" style="left:374px;width:100px;text-align:right;top:181.30px;height:23.75px;line-height:23.75px;font-size:16px;color:#6e7681">9</div>
<div class="t mono" style="left:374px;width:100px;text-align:right;top:225.05px;height:23.75px;line-height:23.75px;font-size:16px;color:#6e7681">10</div>
<div class="t mono" style="left:374px;width:100px;text-align:right;top:248.80px;height:23.75px;line-height:23.75px;font-size:16px;color:#6e7681">11</div>
<div class="t mono" style="left:374px;width:100px;text-align:right;top:272.55px;height:23.75px;line-height:23.75px;font-size:16px;color:#6e7681">12</div>
<div class="t mono" style="left:374px;width:100px;text-align:right;top:296.30px;height:23.75px;line-height:23.75px;font-size:16px;color:#6e7681">13</div>
<div class="t mono" style="left:374px;width:100px;text-align:right;top:340.05px;height:23.75px;line-height:23.75px;font-size:16px;color:#6e7681">14</div>
<div class="t mono" style="left:374px;width:100px;text-align:right;top:363.80px;height:23.75px;line-height:23.75px;font-size:16px;color:#6e7681">15</div>
<div class="t mono" style="left:374px;width:100px;text-align:right;top:387.55px;height:23.75px;line-height:23.75px;font-size:16px;color:#6e7681">16</div>
<div class="t mono" style="left:374px;width:100px;text-align:right;top:411.30px;height:23.75px;line-height:23.75px;font-size:16px;color:#6e7681">17</div>
<div class="t mono" style="left:374px;width:100px;text-align:right;top:435.05px;height:23.75px;line-height:23.75px;font-size:16px;color:#6e7681">18</div>
<div class="t mono" style="left:374px;width:100px;text-align:right;top:458.80px;height:23.75px;line-height:23.75px;font-size:16px;color:#6e7681">19</div>
<div class="t mono" style="left:374px;width:100px;text-align:right;top:482.55px;height:23.75px;line-height:23.75px;font-size:16px;color:#6e7681">20</div>
<div class="t mono" style="left:374px;width:100px;text-align:right;top:506.30px;height:23.75px;line-height:23.75px;font-size:16px;color:#6e7681">21</div>
<div class="t mono" style="left:374px;width:100px;text-align:right;top:550.05px;height:23.75px;line-height:23.75px;font-size:16px;color:#6e7681">22</div>
<div class="t mono" style="left:374px;width:100px;text-align:right;top:573.80px;height:23.75px;line-height:23.75px;font-size:16px;color:#6e7681">23</div>
<div class="t mono" style="left:374px;width:100px;text-align:right;top:597.55px;height:23.75px;line-height:23.75px;font-size:16px;color:#cccccc">24</div>
<div class="t mono" style="left:374px;width:100px;text-align:right;top:621.30px;height:23.75px;line-height:23.75px;font-size:16px;color:#6e7681">25</div>
<div class="t mono" style="left:374px;width:100px;text-align:right;top:645.05px;height:23.75px;line-height:23.75px;font-size:16px;color:#6e7681">26</div>
<div class="t mono" style="left:374px;width:100px;text-align:right;top:668.80px;height:23.75px;line-height:23.75px;font-size:16px;color:#6e7681">27</div>
<div class="t mono" style="left:374px;width:100px;text-align:right;top:692.55px;height:23.75px;line-height:23.75px;font-size:16px;color:#6e7681">28</div>
<div class="t" style="left:506px;top:140.65px;font-family:'Liberation Sans';font-size:14.75px;font-weight:normal;color:#999999;transform:scaleX(1.0032);transform-origin:0 0;">You, 8 hours ago | 1 author (You) | 2 references | 0 implementations</div>
<div class="t" style="left:544.8px;top:208.15px;font-family:'Liberation Sans';font-size:14.75px;font-weight:normal;color:#999999;transform:scaleX(1.0116);transform-origin:0 0;">6 references | 0 overrides | prototype</div>
<div class="t" style="left:545.3px;top:323.15px;font-family:'Liberation Sans';font-size:14.75px;font-weight:normal;color:#999999;transform:scaleX(0.9918);transform-origin:0 0;">1 reference | 0 overrides</div>
<div class="t" style="left:545.3px;top:533.15px;font-family:'Liberation Sans';font-size:14.75px;font-weight:normal;color:#999999;transform:scaleX(0.9918);transform-origin:0 0;">1 reference | 0 overrides</div>
<div class="t mono" style="left:506.3px;top:157.55px;height:23.75px;line-height:23.75px;font-size:16px"><span style="color:#569cd6">class </span><span style="color:#4ec9b0">AttributeService </span><span style="color:#569cd6">extends </span><span style="color:#4ec9b0">BaseCrudService</span></div>
<div class="t mono" style="left:506.3px;top:181.30px;height:23.75px;line-height:23.75px;font-size:16px"><span style="color:#ffd700">{</span></div>
<div class="t mono" style="left:506.3px;top:225.05px;height:23.75px;line-height:23.75px;font-size:16px"><span style="color:#569cd6">    public function </span><span style="color:#dcdcaa">__construct</span><span style="color:#da70d6">()</span></div>
<div class="t mono" style="left:506.3px;top:248.80px;height:23.75px;line-height:23.75px;font-size:16px"><span style="color:#da70d6">    {</span></div>
<div class="t mono" style="left:506.3px;top:272.55px;height:23.75px;line-height:23.75px;font-size:16px"><span style="color:#569cd6">        parent</span><span style="color:#cccccc">::</span><span style="color:#dcdcaa">__construct</span><span style="color:#179fff">(</span><span style="color:#569cd6">new </span><span style="color:#4ec9b0">Attribute</span><span style="color:#179fff">)</span><span style="color:#cccccc">;</span></div>
<div class="t mono" style="left:506.3px;top:296.30px;height:23.75px;line-height:23.75px;font-size:16px"><span style="color:#da70d6">    }</span></div>
<div class="t mono" style="left:506.3px;top:340.05px;height:23.75px;line-height:23.75px;font-size:16px"><span style="color:#569cd6">    public function </span><span style="color:#dcdcaa">updateAttribute</span><span style="color:#da70d6">(</span><span style="color:#569cd6">string </span><span style="color:#9cdcfe">$id</span><span style="color:#cccccc">, </span><span style="color:#569cd6">array </span><span style="color:#9cdcfe">$data</span><span style="color:#da70d6">)</span><span style="color:#cccccc">: </span><span style="color:#569cd6">bool</span></div>
<div class="t mono" style="left:506.3px;top:363.80px;height:23.75px;line-height:23.75px;font-size:16px"><span style="color:#da70d6">    {</span></div>
<div class="t mono" style="left:506.3px;top:387.55px;height:23.75px;line-height:23.75px;font-size:16px"><span style="color:#4ec9b0">        Attribute</span><span style="color:#cccccc">::</span><span style="color:#dcdcaa">where</span><span style="color:#179fff">(</span><span style="color:#ce9178">&#x27;name&#x27;</span><span style="color:#cccccc">, </span><span style="color:#9cdcfe">$id</span><span style="color:#179fff">)</span><span style="color:#cccccc">-&gt;</span><span style="color:#dcdcaa">update</span><span style="color:#179fff">(</span><span style="color:#ffd700">[</span></div>
<div class="t mono" style="left:506.3px;top:411.30px;height:23.75px;line-height:23.75px;font-size:16px"><span style="color:#cccccc">            </span><span style="color:#ce9178">&#x27;name&#x27;</span><span style="color:#cccccc"> =&gt; </span><span style="color:#9cdcfe">$data</span><span style="color:#da70d6">[</span><span style="color:#ce9178">&#x27;name&#x27;</span><span style="color:#da70d6">]</span><span style="color:#cccccc">,</span></div>
<div class="t mono" style="left:506.3px;top:435.05px;height:23.75px;line-height:23.75px;font-size:16px"><span style="color:#cccccc">        </span><span style="color:#ffd700">]</span><span style="color:#179fff">)</span><span style="color:#cccccc">;</span></div>
<div class="t mono" style="left:506.3px;top:482.55px;height:23.75px;line-height:23.75px;font-size:16px"><span style="color:#c586c0">        return </span><span style="color:#569cd6">true</span><span style="color:#cccccc">;</span></div>
<div class="t mono" style="left:506.3px;top:506.30px;height:23.75px;line-height:23.75px;font-size:16px"><span style="color:#da70d6">    }</span></div>
<div class="t mono" style="left:506.3px;top:550.05px;height:23.75px;line-height:23.75px;font-size:16px"><span style="color:#569cd6">    public function </span><span style="color:#dcdcaa">deleteAttribute</span><span style="color:#da70d6">(</span><span style="color:#569cd6">string </span><span style="color:#9cdcfe">$id</span><span style="color:#da70d6">)</span><span style="color:#cccccc">: </span><span style="color:#569cd6">bool</span></div>
<div class="t mono" style="left:506.3px;top:573.80px;height:23.75px;line-height:23.75px;font-size:16px"><span style="color:#da70d6">    {</span></div>
<div class="t mono" style="left:506.3px;top:597.55px;height:23.75px;line-height:23.75px;font-size:16px"><span style="color:#4ec9b0">        Attribute</span><span style="color:#cccccc">::</span><span style="color:#dcdcaa">where</span><span style="color:#179fff">(</span><span style="color:#ce9178">&#x27;name&#x27;</span><span style="color:#cccccc">, </span><span style="color:#9cdcfe">$id</span><span style="color:#179fff">)</span><span style="color:#cccccc">-&gt;</span><span style="color:#dcdcaa">delete</span><span style="color:#179fff">()</span><span style="color:#cccccc">;</span></div>
<div class="t mono" style="left:506.3px;top:621.30px;height:23.75px;line-height:23.75px;font-size:16px"><span style="color:#c586c0">        return </span><span style="color:#569cd6">true</span><span style="color:#cccccc">;</span></div>
<div class="t mono" style="left:506.3px;top:645.05px;height:23.75px;line-height:23.75px;font-size:16px"><span style="color:#da70d6">    }</span></div>
<div class="t mono" style="left:506.3px;top:668.80px;height:23.75px;line-height:23.75px;font-size:16px"><span style="color:#ffd700">}</span></div>
<div class="t mono" style="left:1030px;top:597.55px;height:23.75px;line-height:23.75px;font-size:16px;color:#585858">You, 8 hours ago • attrebuite api</div>
<svg style="left:510px;top:596px" width="14" height="19" viewBox="0 0 14 19"><path d="M7 0.8Q12.8 0.8 12.8 6.4Q12.8 9.2 10.4 11.6V17.6H3.6V11.6Q1.2 9.2 1.2 6.4Q1.2 0.8 7 0.8Z" fill="#ffcc00"/><rect x="5.2" y="13.4" width="3.6" height="2.6" fill="#1f1f1f"/></svg>
<svg style="left:479.5px;top:614.5px" width="7" height="11" viewBox="0 0 7 11"><path d="M0.3 0.3L6.4 5.5L0.3 10.7Z" fill="#f14c4c"/></svg>
</div></div>
<div class="a" style="left:421px;top:124px;width:1451px;height:6px;background:linear-gradient(rgba(0,0,0,0.55),rgba(0,0,0,0))"></div>
<div class="a" style="left:0;top:1051px;width:1872px;height:2px;background:#282828"></div>
<div class="a" style="left:0;top:1053px;width:1872px;height:26px;background:#181818"></div>
<div class="a" style="left:0;top:1053px;width:43px;height:26px;background:#0078d4"></div>
<svg style="left:14px;top:1054px" width="16" height="18" viewBox="0 0 16 18"><path d="M2 6.9L7.5 11.7L2 16.5M12.6 2.3L7.8 7.2L12.6 12" stroke="#ffffff" stroke-width="1.3" fill="none"/></svg>
<svg style="left:51px;top:1055px" width="16" height="18" viewBox="0 0 16 18"><circle cx="4" cy="2.7" r="2.3" stroke="#cccccc" stroke-width="1.2" fill="none"/><circle cx="4" cy="15" r="2.3" stroke="#cccccc" stroke-width="1.2" fill="none"/><circle cx="12.2" cy="5.9" r="2.3" stroke="#cccccc" stroke-width="1.2" fill="none"/><path d="M4 5V12.7M12.2 8.2V9Q12.2 10.4 10.8 10.4H6Q4 10.4 4 12.4" stroke="#cccccc" stroke-width="1.2" fill="none"/></svg>
<div class="t" style="left:71.8px;top:1057.2px;font-family:'Liberation Sans';font-size:15px;font-weight:normal;color:#cccccc;transform:scaleX(0.9973);transform-origin:0 0;">product_module_moaz*</div>
<svg style="left:237px;top:1057px" width="18" height="16" viewBox="0 0 18 16"><path d="M5.6 12.4H4.2Q0.8 12.4 0.8 9Q0.8 6 4 5.8Q5 1.2 9.4 1.2Q13.6 1.4 14.2 5.8Q17.2 6.2 17.2 9Q17.2 12.4 13.8 12.4H12.4M9 15.6V7.4M6 10.2L9 7.2L12 10.2" stroke="#cccccc" stroke-width="1.2" fill="none"/></svg>
<svg style="left:272px;top:1055px" width="17" height="19" viewBox="0 0 17 19"><circle cx="3.4" cy="3.6" r="2.2" stroke="#cccccc" stroke-width="1.2" fill="none"/><circle cx="3.4" cy="13.9" r="2.2" stroke="#cccccc" stroke-width="1.2" fill="none"/><path d="M3.4 5.8V11.7M8.4 1V17.8M3.4 16.1V17.6" stroke="#cccccc" stroke-width="1.2"/><circle cx="12.8" cy="8.5" r="2.2" stroke="#cccccc" stroke-width="1.2" fill="none"/><path d="M12.8 10.7V12Q12.8 13.6 11.2 13.6H8.4" stroke="#cccccc" stroke-width="1.2" fill="none"/></svg>
<svg style="left:305px;top:1053px" width="42" height="24" viewBox="0 0 42 24"><g stroke="#cccccc" stroke-width="1.25" fill="none" stroke-linejoin="round">
<path d="M5 11.6V7.4H9.6M5 15.2V18.6H8.6M12.4 18.6H16.4V13.4M6.2 12.6Q10.4 5 20.6 3.1Q19.4 10.6 12.6 18.2Z"/><circle cx="14.6" cy="9.2" r="1.2"/>
<path d="M29.2 6.3L33.7 11.2Q37.4 9.2 36.4 5.6Q33 3.4 29.2 6.3ZM36.4 5.6L38 3.6M27.4 9.6L32 14Q29.4 17.4 25.6 16.4Q23.8 13 27.4 9.6ZM25 16.4L22.8 18.2M28.6 9.2L30.4 7.4M30.6 11.2L32.4 9.4"/></g></svg>
<div class="t" style="left:349px;top:1057.2px;font-family:'Liberation Sans';font-size:15px;font-weight:normal;color:#cccccc;transform:scaleX(0.9725);transform-origin:0 0;">Launchpad</div>
<svg style="left:441px;top:1056px" width="17" height="17" viewBox="0 0 17 17"><circle cx="8.3" cy="8.4" r="7.4" stroke="#cccccc" stroke-width="1.2" fill="none"/><path d="M5.4 5.5L11.2 11.3M11.2 5.5L5.4 11.3" stroke="#cccccc" stroke-width="1.2"/></svg>
<div class="t" style="left:462px;top:1057.2px;font-family:'Liberation Sans';font-size:15px;font-weight:normal;color:#cccccc;transform:scaleX(1.0788);transform-origin:0 0;">0</div>
<svg style="left:475px;top:1055.5px" width="18" height="17" viewBox="0 0 18 17"><path d="M9 1L17 16H1Z" stroke="#cccccc" stroke-width="1.2" fill="none" stroke-linejoin="round"/><path d="M9 6V11.2" stroke="#cccccc" stroke-width="1.3"/><circle cx="9" cy="13.3" r="0.8" fill="#cccccc"/></svg>
<div class="t" style="left:495.6px;top:1057.2px;font-family:'Liberation Sans';font-size:15px;font-weight:normal;color:#cccccc;transform:scaleX(1.0788);transform-origin:0 0;">0</div>
<svg style="left:524px;top:1055px" width="19" height="18" viewBox="0 0 19 18"><circle cx="9.5" cy="6.5" r="1.6" stroke="#cccccc" stroke-width="1.2" fill="none"/><path d="M9.5 8.2L5.6 17M9.5 8.2L13.4 17M6.6 14.4H12.4M5.8 3.2Q4.2 6.6 5.8 9.8M13.2 3.2Q14.8 6.6 13.2 9.8M3.2 1Q0.2 6.6 3.2 12M15.8 1Q18.8 6.6 15.8 12" stroke="#cccccc" stroke-width="1.2" fill="none"/></svg>
<div class="t" style="left:545.5px;top:1057.2px;font-family:'Liberation Sans';font-size:15px;font-weight:normal;color:#cccccc;transform:scaleX(1.0788);transform-origin:0 0;">0</div>
<svg style="left:1012px;top:1056px" width="14" height="18" viewBox="0 0 14 18"><circle cx="7" cy="9" r="3.8" stroke="#cccccc" stroke-width="1.4" fill="none"/><path d="M7 0.6V5.2M7 12.8V17.4" stroke="#cccccc" stroke-width="1.4"/></svg>
<div class="t" style="left:1031.7px;top:1057.2px;font-family:'Liberation Sans';font-size:15px;font-weight:normal;color:#cccccc;transform:scaleX(0.9861);transform-origin:0 0;">You, 8 hours ago</div>
<svg style="left:1162.5px;top:1056.5px" width="17" height="17" viewBox="0 0 17 17"><circle cx="8.5" cy="8.5" r="7.3" stroke="#cccccc" stroke-width="1.3" fill="none"/><circle cx="8.5" cy="8.5" r="3.4" fill="#cccccc"/></svg>
<div class="t" style="left:1185px;top:1057.2px;font-family:'Liberation Sans';font-size:15px;font-weight:normal;color:#cccccc;transform:scaleX(1.0009);transform-origin:0 0;">Vite</div>
<div class="t" style="left:1229.6px;top:1057.2px;font-family:'Liberation Sans';font-size:15px;font-weight:normal;color:#cccccc;transform:scaleX(0.9658);transform-origin:0 0;">Ln 24, Col 46 (6 selected)</div>
<div class="t" style="left:1414.5px;top:1057.2px;font-family:'Liberation Sans';font-size:15px;font-weight:normal;color:#cccccc;transform:scaleX(0.9219);transform-origin:0 0;">Spaces: 4</div>
<div class="t" style="left:1496px;top:1057.2px;font-family:'Liberation Sans';font-size:15px;font-weight:normal;color:#cccccc;transform:scaleX(0.9342);transform-origin:0 0;">UTF-8</div>
<div class="t" style="left:1556.6px;top:1057.2px;font-family:'Liberation Sans';font-size:15px;font-weight:normal;color:#cccccc;transform:scaleX(0.7655);transform-origin:0 0;">LF</div>
<svg style="left:1588px;top:1056px" width="18" height="18" viewBox="0 0 18 18"><path d="M5.6 1.2Q3.4 1.2 3.4 3.4V5.8Q3.4 7.4 1.8 7.8Q3.4 8.2 3.4 9.8V12.4Q3.4 14.6 5.6 14.6M10.4 1.2Q12.6 1.2 12.6 3.4V5.8Q12.6 7.2 13.8 7.6" stroke="#cccccc" stroke-width="1.2" fill="none"/><circle cx="12.7" cy="12.4" r="3.4" stroke="#cccccc" stroke-width="1.2" fill="#181818"/><path d="M11.3 11L14.1 13.8M14.1 11L11.3 13.8" stroke="#cccccc" stroke-width="1"/></svg>
<div class="t" style="left:1611.5px;top:1057.2px;font-family:'Liberation Sans';font-size:15px;font-weight:normal;color:#cccccc;transform:scaleX(0.9403);transform-origin:0 0;">PHP</div>
<div class="t" style="left:1656.7px;top:1057.2px;font-family:'Liberation Sans';font-size:15px;font-weight:normal;color:#cccccc;transform:scaleX(0.9879);transform-origin:0 0;">8.2</div>
<svg style="left:1696px;top:1055px" width="18" height="18" viewBox="0 0 18 18"><path d="M8.6 9.4Q6 6.4 8.4 3.4Q11.6 0.6 14.8 3.2Q17.4 6.4 14.4 9.6Q11.6 11.6 8.6 9.4L2.4 15.6L3.8 17M4.6 13.4L6.2 15" stroke="#cccccc" stroke-width="1.2" fill="none" stroke-linejoin="round"/><circle cx="12.6" cy="5.4" r="1.2" fill="#cccccc"/></svg>
<svg style="left:1734px;top:1058px" width="15" height="13" viewBox="0 0 15 13"><path d="M1 7L5 11.2L14 1" stroke="#cccccc" stroke-width="1.4" fill="none"/></svg>
<div class="t" style="left:1753px;top:1057.2px;font-family:'Liberation Sans';font-size:15px;font-weight:normal;color:#cccccc;transform:scaleX(1.0493);transform-origin:0 0;">Spell</div>
<div class="a" style="left:1812px;top:1059.5px;width:2px;height:12px;background:#cccccc"></div>
<div class="a" style="left:1817.5px;top:1059.5px;width:2px;height:12px;background:#cccccc"></div>
<div class="t" style="left:1827.7px;top:1057.2px;font-family:'Liberation Sans';font-size:15px;font-weight:normal;color:#cccccc;transform:scaleX(1.0503);transform-origin:0 0;">Ninja</div>
<div class="a" style="left:0;top:1078px;width:1872px;height:1px;background:#050505"></div>
</body></html>
